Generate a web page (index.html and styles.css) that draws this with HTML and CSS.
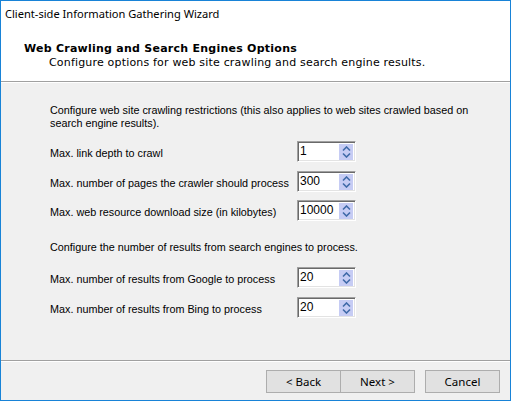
FILE: index.html
```html
<!DOCTYPE html>
<html>
<head>
<meta charset="utf-8">
<link rel="stylesheet" href="styles.css">
</head>
<body>
<div class="window">
  <div class="top">
    <div class="caption">Client-side Information Gathering Wizard</div>
    <div class="head-title">Web Crawling and Search Engines Options</div>
    <div class="head-sub">Configure options for web site crawling and search engine results.</div>
  </div>
  <div class="content">
    <p class="intro">Configure web site crawling restrictions (this also applies to web sites crawled based on search engine results).</p>
    <div class="row r1"><span class="label">Max. link depth to crawl</span><div class="spin"><span class="val">1</span><span class="btn"><svg width="9" height="12" viewBox="0 0 9 12"><path d="M1 4.5 L4.5 1 L8 4.5 M1 7.5 L4.5 11 L8 7.5" fill="none" stroke="#3f6aa8" stroke-width="1.6"/></svg></span></div></div>
    <div class="row r2"><span class="label">Max. number of pages the crawler should process</span><div class="spin"><span class="val">300</span><span class="btn"><svg width="9" height="12" viewBox="0 0 9 12"><path d="M1 4.5 L4.5 1 L8 4.5 M1 7.5 L4.5 11 L8 7.5" fill="none" stroke="#3f6aa8" stroke-width="1.6"/></svg></span></div></div>
    <div class="row r3"><span class="label">Max. web resource download size (in kilobytes)</span><div class="spin"><span class="val">10000</span><span class="btn"><svg width="9" height="12" viewBox="0 0 9 12"><path d="M1 4.5 L4.5 1 L8 4.5 M1 7.5 L4.5 11 L8 7.5" fill="none" stroke="#3f6aa8" stroke-width="1.6"/></svg></span></div></div>
    <p class="intro2">Configure the number of results from search engines to process.</p>
    <div class="row r4"><span class="label">Max. number of results from Google to process</span><div class="spin"><span class="val">20</span><span class="btn"><svg width="9" height="12" viewBox="0 0 9 12"><path d="M1 4.5 L4.5 1 L8 4.5 M1 7.5 L4.5 11 L8 7.5" fill="none" stroke="#3f6aa8" stroke-width="1.6"/></svg></span></div></div>
    <div class="row r5"><span class="label">Max. number of results from Bing to process</span><div class="spin"><span class="val">20</span><span class="btn"><svg width="9" height="12" viewBox="0 0 9 12"><path d="M1 4.5 L4.5 1 L8 4.5 M1 7.5 L4.5 11 L8 7.5" fill="none" stroke="#3f6aa8" stroke-width="1.6"/></svg></span></div></div>
  </div>
  <div class="footer">
    <div class="pair">
      <button class="b">&lt; Back</button><button class="b next">Next &gt;</button>
    </div>
    <button class="b cancel">Cancel</button>
  </div>
</div>
</body>
</html>
```
FILE: styles.css
```css
* { box-sizing: border-box; }
html, body { margin: 0; padding: 0; background: #fff; }
.window {
  width: 511px;
  height: 401px;
  border: 1px solid #1883d7;
  display: flex;
  flex-direction: column;
  background: #f0f0f0;
  font-family: "Liberation Sans", Arial, sans-serif;
  font-size: 10.8px;
  color: #000;
}
.top {
  background: #fff;
  height: 81px;
  border-bottom: 1px solid #a0a0a0;
  box-shadow: 0 1px 0 #fff;
  padding: 5px 0 0 4px;
  flex: none;
}
.caption {
  font-family: "Noto Sans", sans-serif;
  font-size: 11.1px;
  line-height: 15px;
  height: 15px;
}
.head-title {
  margin-top: 21px;
  margin-left: 19px;
  font-family: "DejaVu Sans", sans-serif;
  font-weight: bold;
  font-size: 11px;
  line-height: 14px;
  letter-spacing: 0.25px;
}
.head-sub {
  margin-left: 44px;
  font-family: "DejaVu Sans", sans-serif;
  font-size: 11px;
  line-height: 14px;
  letter-spacing: 0.18px;
}
.content {
  flex: 1;
  padding: 22px 0 0 49px;
  border-bottom: 1px solid #a0a0a0;
  box-shadow: 0 1px 0 #fff;
}
.intro, .intro2 {
  margin: 0;
  line-height: 13px;
  width: 430px;
}
.intro { margin-bottom: 11px; }
.intro2 { margin-top: 20px; margin-bottom: 13px; }
.row {
  display: flex;
  align-items: center;
  height: 21px;
}
.r2, .r5 { margin-top: 9px; }
.r3 { margin-top: 8px; }
.label {
  width: 247px;
  flex: none;
  padding-top: 2px;
}
.spin {
  width: 59px;
  height: 21px;
  background: #fff;
  border: 1px solid;
  border-color: #a0a0a0 #fff #fff #a0a0a0;
  box-shadow: inset 1px 1px 0 #696969, inset -1px -1px 0 #e3e3e3;
  display: flex;
  align-items: center;
  padding: 2px 2px 2px 2px;
}
.val {
  flex: 1;
  font-size: 12px;
  line-height: 15px;
  color: #000;
}
.btn {
  width: 14px;
  height: 16px;
  background: #c6ccf4;
  display: flex;
  align-items: center;
  justify-content: center;
}
.btn svg { display: block; }
.footer {
  height: 39px;
  flex: none;
  display: flex;
  align-items: flex-start;
  padding: 9px 0 0 265px;
  gap: 10px;
}
.pair { display: flex; }
.b {
  width: 75px;
  height: 23px;
  margin: 0;
  padding: 0;
  border: 1px solid #adadad;
  background: #e1e1e1;
  font-family: "Noto Sans", sans-serif;
  font-size: 11.5px;
  color: #000;
}
.next { margin-left: -1px; }
```
